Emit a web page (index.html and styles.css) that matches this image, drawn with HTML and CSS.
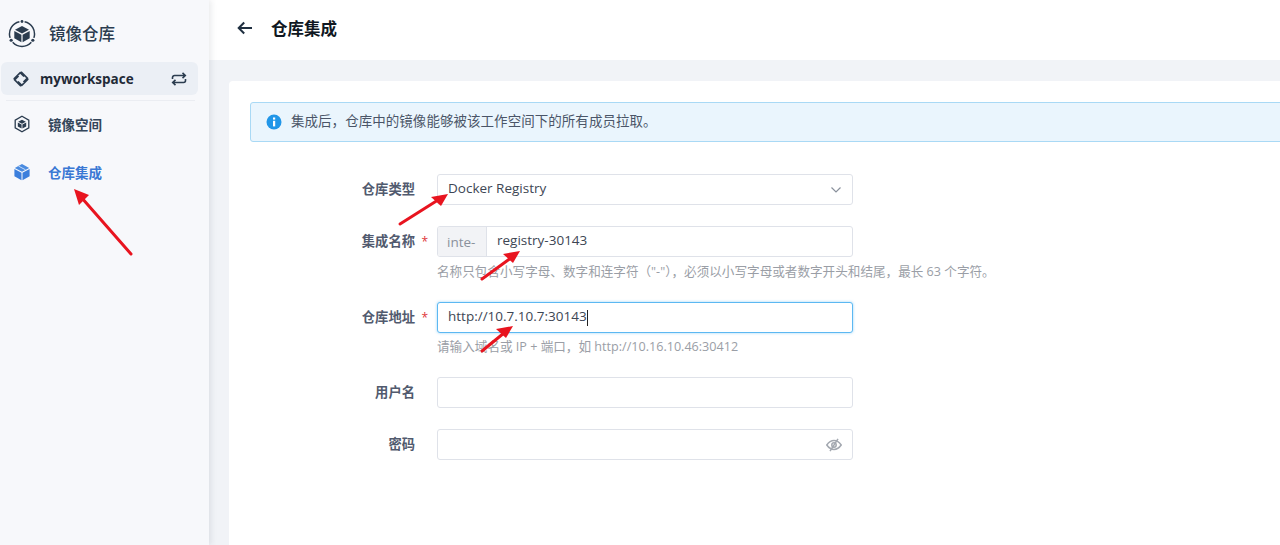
FILE: index.html
```html
<!DOCTYPE html>
<html lang="zh-CN">
<head>
<meta charset="utf-8">
<title>仓库集成</title>
<link rel="stylesheet" href="styles.css">
</head>
<body>
<div class="app">
  <aside class="sidebar">
    <div class="brand">
      <svg class="brand-icon" viewBox="0 0 28 28" width="28" height="28">
        <path d="M16.6 1.770A12.500 12.500 0 0 1 25.890 17.860M23.290 22.360A12.500 12.500 0 0 1 4.710 22.360M2.110 17.860A12.500 12.500 0 0 1 11.400 1.770" fill="none" stroke="#2b3c4f" stroke-width="1.500"/>
        <circle cx="14" cy="1.500" r="1.400" fill="#2b3c4f"/><circle cx="3.170" cy="20.250" r="1.600" fill="#2b3c4f"/><circle cx="24.830" cy="20.250" r="1.600" fill="#2b3c4f"/>
        <path d="M14 6 21 9.800 14 13.500 7 9.800Z" fill="#2b3c4f"/>
        <path d="M6.300 11 13.400 14.700V22.200L6.300 18.300ZM21.700 11 14.600 14.700V22.200L21.700 18.300Z" fill="#2b3c4f"/>
      </svg>
      <span class="brand-name">镜像仓库</span>
    </div>
    <div class="workspace">
      <svg viewBox="0 0 16 16" width="16" height="16" fill="none" stroke="#2b3c4f" stroke-width="1.700">
        <path d="M8 .8 14.400 7.200 10.500 11.100M15.200 8 8.800 14.400 4.900 10.500M8 15.200 1.600 8.800 5.500 4.900M.8 8 7.200 1.600 11.100 5.500"/>
      </svg>
      <span class="ws-name">myworkspace</span>
      <svg class="ws-switch" viewBox="0 0 16 16" width="16" height="16" fill="none" stroke="#2b3c4f" stroke-width="1.600">
        <path d="M1.500 8V6.500A2 2 0 0 1 3.500 4.500H14M11.500 1.800 14.300 4.500 11.500 7.200"/>
        <path d="M14.500 8V9.500A2 2 0 0 1 12.500 11.500H2M4.500 8.800 1.700 11.500 4.500 14.200"/>
      </svg>
    </div>
    <div class="divider"></div>
    <nav class="nav">
      <div class="nav-item">
        <svg viewBox="0 0 18 18" width="18" height="18">
          <path d="M9 1.200 15.800 5.100V12.900L9 16.800 2.200 12.900V5.100Z" fill="none" stroke="#2b3c4f" stroke-width="1.300"/>
          <path d="M9 4.700 12.800 6.800 9 8.800 5.200 6.800Z" fill="#2b3c4f"/>
          <path d="M4.800 7.600 8.600 9.600V13.500L4.800 11.400ZM13.200 7.600 9.400 9.600V13.500L13.200 11.400Z" fill="#2b3c4f"/>
        </svg>
        <span>镜像空间</span>
      </div>
      <div class="nav-item active">
        <svg viewBox="0 0 18 18" width="18" height="18">
          <path d="M9 1 16.200 4.900 9 8.700 1.800 4.900Z" fill="#4a8be0"/>
          <path d="M1.400 5.900 8.500 9.700V17.200L1.400 13.300ZM16.600 5.900 9.500 9.700V17.200L16.600 13.300Z" fill="#3c7fdc"/>
          <path d="M5.400 3 12.500 6.800" stroke="#c5dbf6" stroke-width="1"/>
        </svg>
        <span>仓库集成</span>
      </div>
    </nav>
  </aside>
  <div class="content">
    <header class="topbar">
      <svg class="back" viewBox="0 0 16 14" width="16" height="14" fill="none" stroke="#1f2f40" stroke-width="2">
        <path d="M15 7H2M7.200 1.500 1.700 7 7.200 12.500"/>
      </svg>
      <h1>仓库集成</h1>
    </header>
    <main class="main">
      <section class="card">
        <div class="alert">
          <svg viewBox="0 0 16 16" width="16" height="16">
            <circle cx="8" cy="8" r="7.500" fill="#2196e8"/>
            <rect x="7" y="6.800" width="2.200" height="5.600" fill="#fff"/>
            <rect x="7" y="3.500" width="2.200" height="2.100" fill="#fff"/>
          </svg>
          <span class="alert-text">集成后，仓库中的镜像能够被该工作空间下的所有成员拉取。</span>
        </div>
        <form class="form">
          <div class="row">
            <label class="label">仓库类型</label>
            <div class="field select"><span class="value">Docker Registry</span>
              <svg viewBox="0 0 12 8" width="12" height="8" fill="none" stroke="#8a919c" stroke-width="1.200"><path d="M1.500 1.500 6 6 10.500 1.500"/></svg>
            </div>
          </div>
          <div class="row row-name">
            <label class="label">集成名称<i class="req">*</i></label>
            <div class="col">
              <div class="field prefixed"><span class="prefix">inte-</span><span class="value">registry-30143</span></div>
              <p class="hint">名称只包含小写字母、数字和连字符（"-"），必须以小写字母或者数字开头和结尾，最长 63 个字符。</p>
            </div>
          </div>
          <div class="row row-addr">
            <label class="label">仓库地址<i class="req">*</i></label>
            <div class="col">
              <div class="field focused"><span class="value">http://10.7.10.7:30143</span><span class="caret"></span></div>
              <p class="hint">请输入域名或 IP + 端口，如 http://10.16.10.46:30412</p>
            </div>
          </div>
          <div class="row row-user">
            <label class="label">用户名</label>
            <div class="field tall"></div>
          </div>
          <div class="row row-pass">
            <label class="label">密码</label>
            <div class="field pass">
              <svg viewBox="0 0 16 14" width="16" height="14" fill="none" stroke="#a3a8b0" stroke-width="1.500">
                <path d="M.8 7C3 3.800 5.300 2.600 8 2.600S13 3.800 15.200 7C13 10.200 10.700 11.400 8 11.400S3 10.200.8 7Z"/>
                <circle cx="8" cy="7" r="2.200"/>
                <path d="M12 .8 4 13.200"/>
              </svg>
            </div>
          </div>
        </form>
      </section>
    </main>
  </div>
  <svg class="arrows" viewBox="0 0 1280 545" width="1280" height="545">
    <g stroke="#e8141f" stroke-width="3" stroke-linecap="round" fill="none">
      <path d="M131 254 81 197"/>
      <path d="M400 224 438 200"/>
      <path d="M482 279 511 258"/>
      <path d="M482 351 504 333"/>
    </g>
    <g fill="#e8141f">
      <path d="M74 189 89 195 79 205Z"/>
      <path d="M448 194 441 206 431 197Z"/>
      <path d="M520 251 513 263 503 254Z"/>
      <path d="M513 326 506 338 496 329Z"/>
    </g>
  </svg>
</div>
</body>
</html>
```
FILE: styles.css
```css
* { box-sizing: border-box; }
html, body { margin: 0; height: 100%; overflow: hidden; }
body {
  font-family: "Open Sans", "Noto Sans CJK SC", sans-serif;
  font-size: 13.500px;
  color: #36435c;
  background: #f1f3f7;
}
.app { position: relative; display: flex; width: 1280px; height: 545px; overflow: hidden; }
.sidebar {
  width: 209px;
  flex: none;
  background: #f7f8fb;
  box-shadow: 2px 0 6px rgba(36, 46, 66, .1);
  padding: 19px 11px 0 1px;
  position: relative;
  z-index: 1;
}
.brand { display: flex; align-items: center; height: 30px; padding-left: 7px; gap: 13px; }
.brand-name { font-size: 16.500px; font-weight: 500; color: #2b3c4f; margin-top: -3px; }
.workspace {
  display: flex;
  align-items: center;
  height: 33px;
  margin-top: 13px;
  padding: 0 11px 0 12px;
  border-radius: 6px;
  background: #ebeff5;
  gap: 11px;
}
.ws-name { font-size: 13.500px; font-weight: 700; color: #1f2a37; flex: 1; }
.divider { height: 1px; background: #ebedf2; margin: 5px 3px 0 5px; }
.nav { display: flex; flex-direction: column; margin-top: -1px; }
.nav-item {
  display: flex;
  align-items: center;
  height: 48px;
  padding-left: 12px;
  gap: 17px;
  font-size: 13.500px;
  font-weight: 700;
  color: #34465a;
}
.nav-item.active { color: #3a78d4; }
.content { flex: 1; display: flex; flex-direction: column; min-width: 0; }
.topbar { display: flex; align-items: center; height: 60px; flex: none; background: #fff; padding: 0 0 4px 28px; gap: 18px; }
.topbar h1 { margin: 0; font-size: 16.500px; font-weight: 700; color: #0f1722; }
.main { flex: 1; padding: 21px 0 0 20px; }
.card { height: 100%; background: #fff; border-radius: 4px 0 0 0; padding: 21px 0 0 21px; width: 1100px; }
.alert {
  display: flex;
  align-items: center;
  height: 40px;
  padding-left: 15px;
  gap: 9px;
  background: #eaf5fd;
  border: 1px solid #a9d9f5;
  border-radius: 3px;
  color: #4a5568;
  font-size: 13.500px;
}
.alert-text { padding-bottom: 4px; letter-spacing: .04px; }
.form { display: flex; flex-direction: column; padding-top: 32px; }
.row { display: flex; align-items: flex-start; }
.label {
  width: 165px;
  flex: none;
  height: 30px;
  line-height: 30px;
  text-align: right;
  font-size: 13.300px;
  font-weight: 700;
  color: #515a6e;
  position: relative;
}
.req { position: absolute; right: -13px; top: 1px; color: #e0353a; font-style: normal; font-weight: 400; font-size: 12px; }
.col { width: 416px; flex: none; margin-left: 22px; }
.field {
  display: flex;
  align-items: center;
  width: 416px;
  margin-left: 22px;
  height: 31px;
  padding: 0 10px;
  background: #fff;
  border: 1px solid #dfe2e9;
  border-radius: 3px;
  flex: none;
}
.col .field { margin-left: 0; }
.value { color: #3d4654; font-size: 13.500px; padding-bottom: 3px; }
.select { justify-content: space-between; }
.prefixed { padding: 0; }
.prefix {
  display: flex;
  align-items: center;
  width: 49px;
  height: 100%;
  padding-left: 9px;
  color: #8a919c;
  background: #f2f3f6;
  border-right: 1px solid #dfe2e9;
  border-radius: 2px 0 0 2px;
}
.prefixed .value { padding-left: 10px; }
.focused { border-color: #5cb8f2; box-shadow: 0 0 3px rgba(92, 184, 242, .6); }
.caret { width: 1px; height: 16px; background: #222; }
.hint { margin: 5px 0 0; font-size: 12.600px; line-height: 18px; color: #9a9ea6; white-space: nowrap; }
.row-name { margin-top: 21px; }
.row-name .hint { margin-top: 6px; }
.row-addr { margin-top: 21px; }
.row-user { margin-top: 21px; }
.row-pass { margin-top: 21px; }
.pass { justify-content: flex-end; }
.arrows { position: absolute; left: 0; top: 0; z-index: 5; pointer-events: none; }
```
